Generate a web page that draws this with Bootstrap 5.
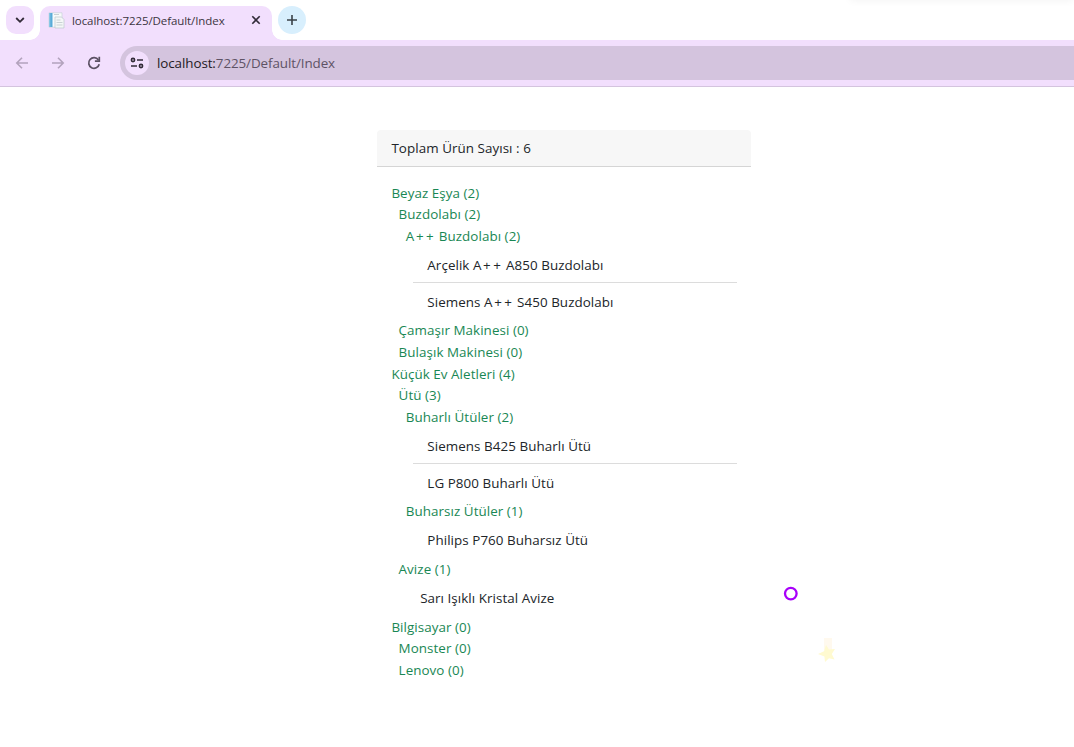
<!DOCTYPE html>
<html lang="tr">
<head>
<meta charset="utf-8">
<title>localhost:7225/Default/Index</title>
<link href="https://cdn.jsdelivr.net/npm/bootstrap@5.3.0/dist/css/bootstrap.min.css" rel="stylesheet">
<style>
html{font-size:14.4px}
body{font-family:"Open Sans","Noto Sans",sans-serif;height:747px;overflow:hidden;background:#fff;position:relative}
.tabstrip{height:40px;padding:6px 0 0 6px}
.tab-search{width:28px;height:28px;border-radius:10px;background:#f2dffd}
.tab-active{width:232px;height:34px;margin-left:6px;padding:0 10px 5px 8px;border-radius:10px 10px 0 0;background:#f2dffd;position:relative}
.tab-active::before,.tab-active::after{content:"";position:absolute;bottom:0;width:10px;height:10px}
.tab-active::before{left:-10px;background:radial-gradient(circle at 0 0,transparent 9.5px,#f2dffd 10px)}
.tab-active::after{right:-10px;background:radial-gradient(circle at 100% 0,transparent 9.5px,#f2dffd 10px)}
.tab-title{font-size:11.5px;letter-spacing:-.08px;color:#3c3541;margin-left:7px;white-space:nowrap}
.tab-new{width:28px;height:28px;margin-left:6px;background:#d8effd}
.toolbar{height:47px;background:#f2dffd;border-bottom:1px solid #d4c4de;padding-left:14px}
.toolbar .nav-icon{margin-right:20px}
.omnibox{height:34px;margin-left:-2px;padding-left:5px;border-radius:17px 0 0 17px;background:#d4c4de}
.site-info{width:24px;height:24px;background:#f2dffd}
.address{font-size:13.4px;letter-spacing:-.08px;margin-left:8px;padding-top:1px;color:#5e5365}
.address b{font-weight:400;color:#1f1a24}
.catalog{width:374px;margin:43px 0 0 377px;--bs-card-border-width:0;font-size:13.4px;letter-spacing:.06px;line-height:21.6px}
.catalog .card-header{padding:8.4px 14.4px 6px;border-bottom:1px solid #d5d5d5;background:#f7f7f7;border-radius:4px 4px 0 0}
.catalog .card-body{padding-top:15.7px}
.catalog .list-group{--bs-list-group-border-color:#dcdcdc;margin:-1.3px 0 1.3px}
.catalog .list-group-item{padding-top:8.6px;padding-bottom:5.8px}
.plus{letter-spacing:2.4px;margin:0 -.8px 0 1.6px}
.window-shadow{left:850px;right:0;top:-8px;height:8px;box-shadow:0 0 8px rgba(0,0,0,.06)}
.cursor-ring{left:783px;top:586px}
.sparkle{left:816px;top:636px}
</style>
</head>
<body>
<div class="window-shadow position-absolute"></div>
<header>
  <div class="tabstrip d-flex">
    <div class="tab-search d-flex align-items-center justify-content-center">
      <svg width="10" height="8" viewBox="0 0 10 8" fill="none" stroke="#322b38" stroke-width="1.8"><path d="M1.2 2 5 5.8 8.8 2"/></svg>
    </div>
    <div class="tab-active d-flex align-items-center">
      <svg width="17" height="17" viewBox="0 0 17 17"><path d="M1 .8h13v14.4H1z" fill="#f7fafb" stroke="#c9d3d8" stroke-width=".7"/><path d="M1.3 1h3.2v14H1.3z" fill="#59acd8"/><path d="M1.3 1h1v14h-1z" fill="#8ccae7"/><path d="M7 5h6.5l2.5 2.5V16H7z" fill="#f4f7f7" stroke="#bcc7cc" stroke-width=".7"/><path d="M6 2.5h5M8.5 8h4M8.5 10.5h6M8.5 13h6" stroke="#c9d2d4"/></svg>
      <span class="tab-title">localhost:7225/Default/Index</span>
      <svg class="ms-auto" width="11" height="11" viewBox="0 0 11 11" stroke="#322b38" stroke-width="1.6"><path d="m1.3 1.3 7.4 7.4m0-7.4L1.3 8.7"/></svg>
    </div>
    <div class="tab-new rounded-circle d-flex align-items-center justify-content-center">
      <svg width="12" height="12" viewBox="0 0 12 12" stroke="#3a4147" stroke-width="1.6"><path d="M6 1v10M1 6h10"/></svg>
    </div>
  </div>
  <div class="toolbar d-flex align-items-center">
    <svg class="nav-icon" width="16" height="16" viewBox="0 0 16 16" fill="none" stroke="#b3a3bd" stroke-width="1.6"><path d="M14 8H3M8 2.8 2.8 8 8 13.2"/></svg>
    <svg class="nav-icon" width="16" height="16" viewBox="0 0 16 16" fill="none" stroke="#b3a3bd" stroke-width="1.6"><path d="M2 8h11M8 2.8 13.2 8 8 13.2"/></svg>
    <svg class="nav-icon" width="16" height="16" viewBox="0 0 16 16" fill="none" stroke="#5b5063" stroke-width="1.7"><path d="M13.2 9.2A5.3 5.3 0 1 1 12.4 5"/><path d="M13.3 1.8v4.4H8.9"/></svg>
    <div class="omnibox flex-grow-1 d-flex align-items-center">
      <div class="site-info rounded-circle d-flex align-items-center justify-content-center">
        <svg width="14" height="14" viewBox="0 0 14 14" fill="none" stroke="#322b38" stroke-width="1.6"><circle cx="3" cy="4" r="1.6"/><path d="M7 4h6M1 10h6"/><circle cx="11" cy="10" r="1.6"/></svg>
      </div>
      <span class="address"><b>localhost:</b>7225/Default/Index</span>
    </div>
  </div>
</header>
<main>
  <div class="catalog card bg-transparent">
    <div class="card-header"><span>Toplam Ürün Sayısı : 6</span></div>
    <div class="card-body text-success">
      <div><span>Beyaz Eşya (2)</span>
        <div class="ps-2"><span>Buzdolabı (2)</span>
          <div class="ps-2"><span>A<span class="plus">++</span> Buzdolabı (2)</span>
            <div class="ps-2"><ul class="list-group list-group-flush">
              <li class="list-group-item"><span>Arçelik A<span class="plus">++</span> A850 Buzdolabı</span></li>
              <li class="list-group-item"><span>Siemens A<span class="plus">++</span> S450 Buzdolabı</span></li>
            </ul></div>
          </div>
        </div>
        <div class="ps-2"><span>Çamaşır Makinesi (0)</span></div>
        <div class="ps-2"><span>Bulaşık Makinesi (0)</span></div>
      </div>
      <div><span>Küçük Ev Aletleri (4)</span>
        <div class="ps-2"><span>Ütü (3)</span>
          <div class="ps-2"><span>Buharlı Ütüler (2)</span>
            <div class="ps-2"><ul class="list-group list-group-flush">
              <li class="list-group-item"><span>Siemens B425 Buharlı Ütü</span></li>
              <li class="list-group-item"><span>LG P800 Buharlı Ütü</span></li>
            </ul></div>
          </div>
          <div class="ps-2"><span>Buharsız Ütüler (1)</span>
            <div class="ps-2"><ul class="list-group list-group-flush">
              <li class="list-group-item"><span>Philips P760 Buharsız Ütü</span></li>
            </ul></div>
          </div>
        </div>
        <div class="ps-2"><span>Avize (1)</span>
          <div class="ps-2"><ul class="list-group list-group-flush">
            <li class="list-group-item"><span>Sarı Işıklı Kristal Avize</span></li>
          </ul></div>
        </div>
      </div>
      <div><span>Bilgisayar (0)</span>
        <div class="ps-2"><span>Monster (0)</span></div>
        <div class="ps-2"><span>Lenovo (0)</span></div>
      </div>
    </div>
  </div>
</main>
<svg class="cursor-ring position-absolute" width="16" height="16" viewBox="0 0 16 16"><circle cx="7.8" cy="7.6" r="5.8" fill="none" stroke="#a800fa" stroke-width="2.3"/></svg>
<svg class="sparkle position-absolute" width="24" height="30" viewBox="0 0 24 30"><path d="M8 2h8v12H8z" fill="#fff9ee"/><path d="m10 9 3 4.5 6-.5-3.2 5 2.7 5.5-5.5-1.2L9 26l-.6-5.5L2 18l6-2.7z" fill="#fffad0"/></svg>
<script src="https://cdn.jsdelivr.net/npm/bootstrap@5.3.0/dist/js/bootstrap.bundle.min.js"></script>
</body>
</html>
